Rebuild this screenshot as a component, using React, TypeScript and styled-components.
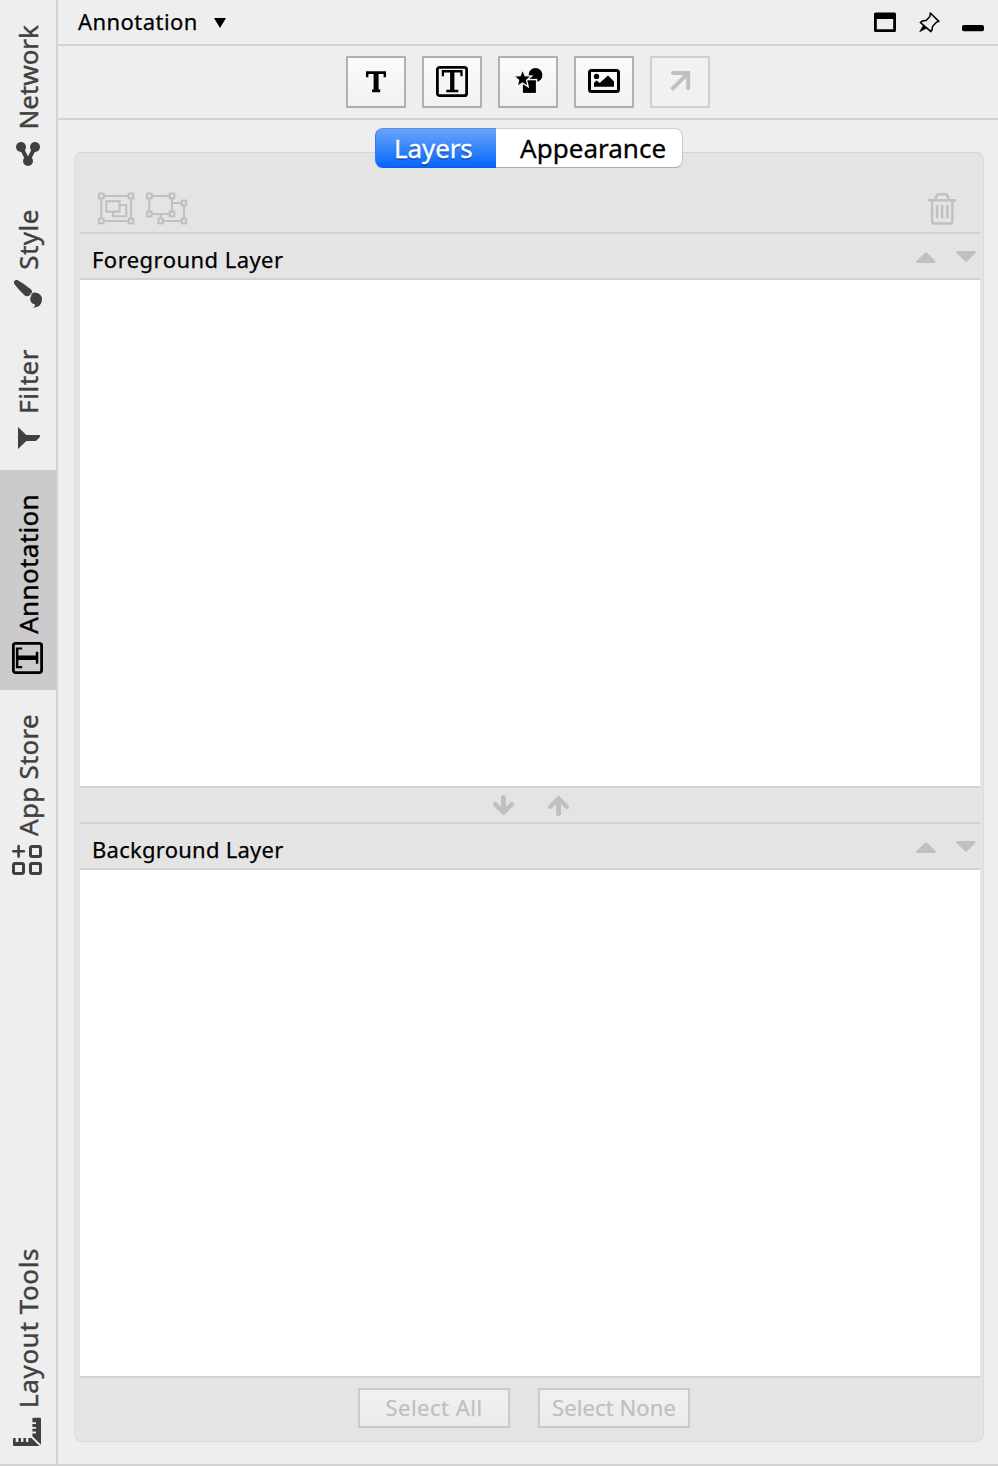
import React from 'react';
import styled, { createGlobalStyle, css } from 'styled-components';

const GlobalStyle = createGlobalStyle`
  * { box-sizing: border-box; }
  body {
    margin: 0;
    background: #eeeeee;
    font-family: 'Noto Sans', 'Open Sans', sans-serif;
    color: #000;
  }
  svg { display: block; flex: none; }
`;

const line = '#d2d2d2';
const disabled = '#c0c0c0';

const Window = styled.div`
  display: flex;
  width: 998px;
  height: 1466px;
  background: #eeeeee;
  border-bottom: 2px solid ${line};
  overflow: hidden;
`;

const Sidebar = styled.nav`
  display: flex;
  flex-direction: column;
  width: 58px;
  flex: none;
  border-right: 2px solid ${line};
`;

const Spacer = styled.div`
  flex: 1;
`;

const SideTab = styled.div<{ $height: number; $active?: boolean }>`
  display: flex;
  flex-direction: column;
  justify-content: flex-end;
  align-items: center;
  gap: 8.6px;
  height: ${(p) => p.$height}px;
  padding-bottom: 16px;
  flex: none;
  color: ${(p) => (p.$active ? '#000' : '#404040')};
  background: ${(p) => (p.$active ? '#cbcbcb' : 'transparent')};
`;

const SideLabel = styled.span<{ $tracking: number }>`
  writing-mode: vertical-rl;
  transform: rotate(180deg);
  font-size: 26px;
  line-height: 36px;
  white-space: nowrap;
  letter-spacing: ${(p) => p.$tracking}px;
  -webkit-text-stroke: 0.4px currentColor;
`;

const Main = styled.main`
  display: flex;
  flex-direction: column;
  flex: 1;
  min-width: 0;
`;

const TitleBar = styled.header`
  display: flex;
  align-items: center;
  justify-content: space-between;
  height: 46px;
  padding: 0 14px 0 20px;
  border-bottom: 2px solid ${line};
`;

const TitleMenu = styled.div`
  display: flex;
  align-items: center;
  gap: 16px;
  padding-bottom: 2px;
`;

const MenuArrow = styled.svg`
  margin-top: 4px;
`;

const WindowActions = styled.div`
  display: flex;
  gap: 22px;
`;

const Text = styled.span<{ $tracking?: number }>`
  font-size: 22px;
  line-height: 30px;
  white-space: nowrap;
  letter-spacing: ${(p) => p.$tracking ?? 0}px;
  -webkit-text-stroke: 0.25px currentColor;
`;

const ToolBar = styled.div`
  display: flex;
  justify-content: center;
  gap: 16px;
  height: 74px;
  padding-top: 10px;
  border-bottom: 2px solid ${line};
`;

const ToolButton = styled.button`
  display: flex;
  align-items: center;
  justify-content: center;
  width: 60px;
  height: 52px;
  padding: 0;
  border: 2px solid #b0b0b0;
  background: linear-gradient(#fbfbfb, #f1f1f1);
  color: #000;
  &:disabled {
    border-color: #cfcfcf;
    background: #f1f1f1;
    color: ${disabled};
  }
`;

const Content = styled.section`
  display: flex;
  flex-direction: column;
  align-items: center;
  flex: 1;
  padding: 8px 14px 22px 16px;
`;

const Segmented = styled.div`
  display: flex;
  position: relative;
  z-index: 1;
  height: 40px;
  width: 308px;
  margin-bottom: -16px;
  border-radius: 8px;
`;

const Segment = styled.div<{ $tracking: number; $selected?: boolean }>`
  display: flex;
  align-items: center;
  font-size: 26px;
  line-height: 36px;
  padding-bottom: 1px;
  letter-spacing: ${(p) => p.$tracking}px;
  -webkit-text-stroke: 0.3px currentColor;
  ${(p) =>
    p.$selected
      ? css`
          width: 121px;
          padding-left: 18px;
          color: #fff;
          background: linear-gradient(#6aa5f9, #0566fd);
          border: 1px solid;
          border-width: 1px 0 1px 1px;
          border-color: #5590ea #2f7cf0 #0a5ce6;
          border-radius: 8px 0 0 8px;
          text-shadow: 0 2px 1px rgba(0, 0, 0, 0.28);
        `
      : css`
          flex: 1;
          padding-left: 24px;
          background: #fff;
          border: 1px solid;
          border-width: 1px 1px 1px 0;
          border-color: #cfcfcf #c6c6c6 #ababab #fff;
          border-radius: 0 8px 8px 0;
        `}
`;

const Panel = styled.div`
  display: flex;
  flex-direction: column;
  align-self: stretch;
  flex: 1;
  padding: 0 3px 0 5px;
  border: 1px solid #dcdcdc;
  border-top-color: #d4d4d4;
  border-radius: 8px;
  background: #e4e4e4;
`;

const LayerTools = styled.div`
  display: flex;
  justify-content: space-between;
  height: 81px;
  padding: 39px 22px 0 16px;
  border-bottom: 2px solid ${line};
`;

const IconGroup = styled.div`
  display: flex;
`;

const LayerHeader = styled.div`
  display: flex;
  align-items: center;
  justify-content: space-between;
  height: 46px;
  padding: 6px 4px 0 12px;
  border-bottom: 2px solid ${line};
`;

const OrderButtons = styled.div`
  display: flex;
  gap: 20px;
  margin-top: -4px;
`;

const LayerList = styled.div`
  height: 508px;
  background: #fff;
  border-bottom: 2px solid ${line};
`;

const MoveBar = styled.div`
  display: flex;
  align-items: center;
  justify-content: center;
  gap: 32px;
  height: 36px;
  padding: 0 0 0 1px;
  border-bottom: 2px solid ${line};
`;

const Footer = styled.div`
  display: flex;
  justify-content: center;
  gap: 28px;
  padding: 10px 12px 0 0;
`;

const SelectButton = styled.button`
  display: flex;
  align-items: center;
  justify-content: center;
  width: 152px;
  height: 40px;
  padding: 0 0 2px 0;
  border: 2px solid #cacaca;
  background: linear-gradient(#f1f1f1, #ebebeb);
  color: ${disabled};
  font-family: inherit;
`;

const NetworkIcon = () => (
  <svg width="32" height="32" fill="currentColor">
    <path d="M9 9L16 23L23 9" fill="none" stroke="currentColor" strokeWidth="4" />
    <circle cx="9" cy="9" r="5" />
    <circle cx="23" cy="9" r="5" />
    <circle cx="16" cy="23" r="5" />
  </svg>
);

const StyleIcon = () => (
  <svg width="32" height="32" fill="currentColor">
    <path d="M2 3.5Q2.6 1.6 5.4 2.1Q13 6.4 18.8 11.2Q20.8 13.2 19.9 14.6Q18.4 15.6 17.6 17.5Q14.6 19.2 12.2 17Q6.6 11.6 2.3 6Q1.8 4.6 2 3.5Z" />
    <path d="M19.3 16.2Q20.6 14.2 23.2 14.6Q30 15.4 30 21.6Q29.6 29.6 21 29.7Q24 27.6 22.8 26.6Q17.4 25 18.3 19.6Q19.8 18.6 19.3 16.2Z" />
  </svg>
);

const FilterIcon = () => (
  <svg width="32" height="32" fill="currentColor">
    <path d="M6 5L14.3 13H27Q29 13.6 27.6 15.2L24 19H14.3L6 27Z" />
  </svg>
);

const BoxedTextIcon = ({ turned }: { turned?: boolean }) => (
  <svg width="32" height="32" viewBox="0 0 32 32" fill="currentColor">
    <g transform={turned ? 'rotate(-90 16 16)' : undefined}>
      <rect x="1.4" y="1.4" width="29.2" height="28.2" rx="2.2" fill="none" stroke="currentColor" strokeWidth="2.8" />
      <path d="M5.8 3.9H26.6V10.2H24.4V6.4H18.4V23.8H22.3V26.3H10.3V23.8H14.1V6.4H8V10.2H5.8Z" />
    </g>
  </svg>
);

const AppStoreIcon = () => (
  <svg width="32" height="32" fill="none" stroke="currentColor" strokeWidth="3">
    <path d="M1.3 7.3H11.9M6.6 2V12.6" strokeWidth="2.6" strokeLinecap="round" />
    <rect x="18.5" y="2.5" width="10" height="10" rx="1.8" />
    <rect x="1.5" y="19.5" width="10" height="10" rx="1.8" />
    <rect x="18.5" y="19.5" width="10" height="10" rx="1.8" />
  </svg>
);

const RulerIcon = () => (
  <svg width="32" height="32" fill="currentColor">
    <path d="M2.2 22H3.7V26H6.4V22H9V26H11.4V22H14V26H16.4V22H19.4L27.6 30H2.2Q1 30 1 28.8V23.2Q1 22 2.2 22Z" />
    <path d="M21.4 1.7H28Q29 1.7 29 2.8V28.8L20.4 20.2V17.4H24V15.6H20.4V12.7H24V10.9H20.4V8H24V6.2H20.4V2.7Q20.4 1.7 21.4 1.7Z" />
  </svg>
);

const WindowIcon = () => (
  <svg width="22" height="22">
    <path fillRule="evenodd" d="M1.5 1.5H20.5Q22 1.5 22 3V19.5Q22 21 20.5 21H1.5Q0 21 0 19.5V3Q0 1.5 1.5 1.5ZM2.8 8V18.2H19.2V8Z" />
  </svg>
);

const PinIcon = () => (
  <svg width="22" height="22" fill="none" stroke="#000" strokeWidth="1.5" strokeLinejoin="round">
    <path d="M12.3 2L20.9 10.4L18.4 11.2L14.5 15.4Q14.6 18.8 12.9 20.6L2.3 11.4Q4 9.4 8.1 9.6L11.9 5.4Z" />
    <path d="M5.2 14.3L1.5 20.9L8.6 17.2Z" fill="#000" strokeWidth="0.4" />
  </svg>
);

const MinimizeIcon = () => (
  <svg width="22" height="22">
    <rect x="0" y="14" width="22" height="6.3" rx="1.8" />
  </svg>
);

const TextIcon = () => (
  <svg width="32" height="32" viewBox="0 0 32 32" fill="currentColor">
    <path d="M6 5.2H26V11.2H23.6V8H18.6V23.6H20.2V26.2H12V23.6H13.6V8H8.4V11.2H6Z" />
  </svg>
);

const ShapesIcon = () => (
  <svg width="32" height="32" fill="#000" stroke="#f7f7f7" strokeWidth="1.4">
    <circle cx="23.5" cy="9" r="7.6" />
    <rect x="10.2" y="13.6" width="14.4" height="14" />
    <path d="M10.6 3.6L13.1 9.7L19.6 10.1L14.6 14.3L16.2 20.8L10.6 17.2L5 20.8L6.6 14.3L1.6 10.1L8.1 9.7Z" />
  </svg>
);

const ImageIcon = () => (
  <svg width="32" height="32" fill="#000">
    <rect x="1.5" y="4.5" width="29" height="21" rx="2" fill="none" stroke="#000" strokeWidth="3" />
    <circle cx="8.5" cy="10.4" r="2.7" />
    <path d="M6 20.8V16.8L8.7 14.6L11.7 17L20 9.6L26 15.4V20.8Z" />
  </svg>
);

const DiagonalArrowIcon = () => (
  <svg width="32" height="32" fill="none" stroke="currentColor" strokeWidth="4">
    <path d="M9 7H24.2V22" strokeLinecap="round" />
    <path d="M7.6 23.6L23.6 7.6" />
  </svg>
);

const Handles = ({ points }: { points: number[][] }) => (
  <>
    {points.map(([x, y]) => (
      <rect key={`${x}-${y}`} x={x - 2.3} y={y - 2.3} width="4.6" height="4.6" fill="#e4e4e4" />
    ))}
  </>
);

const GroupIcon = () => (
  <svg width="48" height="34" fill="none" stroke={disabled} strokeWidth="2.1">
    <rect x="5.3" y="4" width="29.7" height="25" />
    <rect x="10.3" y="9.2" width="13.2" height="10.4" />
    <path d="M23.5 13H30.3V24.2H17.2V19.6" />
    <Handles points={[[5.3, 4], [35, 4], [5.3, 29], [35, 29]]} />
  </svg>
);

const UngroupIcon = () => (
  <svg width="48" height="34" fill="none" stroke={disabled} strokeWidth="2.1">
    <rect x="5.3" y="4" width="22.7" height="18" />
    <path d="M28 11H40V29H16.7V22" />
    <Handles points={[[5.3, 4], [28, 4], [5.3, 22], [28, 22], [40, 11], [40, 29], [16.7, 29]]} />
  </svg>
);

const TrashIcon = () => (
  <svg width="32" height="34" fill="none" stroke={disabled} strokeWidth="2.4">
    <path d="M2 8.3H30M9 8L10.6 3.8Q11.1 2.3 12.7 2.3H19.3Q20.9 2.3 21.4 3.8L23 8" />
    <path d="M6.1 8.3V29Q6.1 31.5 8.6 31.5H24Q26.4 31.5 26.4 29V8.3" />
    <path d="M11.1 13V26.2M16.1 13V26.2M21.4 13V26.2" />
  </svg>
);

const RaiseIcon = () => (
  <svg width="20" height="14" fill={disabled}>
    <path d="M0.4 11L9 2.8Q10 1.9 11 2.8L19.4 11Q20.2 12.6 18.6 13H1.2Q-0.4 12.6 0.4 11Z" />
  </svg>
);

const LowerIcon = () => (
  <svg width="20" height="14" fill={disabled}>
    <path d="M0.4 3L9 11.2Q10 12.2 11 11.2L19.4 3Q20.2 1.4 18.6 1H1.2Q-0.4 1.4 0.4 3Z" />
  </svg>
);

const MoveArrow = ({ up }: { up?: boolean }) => (
  <svg width="22" height="22" viewBox="0 0 22 22" fill="none" stroke={disabled} strokeWidth="5">
    <g transform={up ? 'rotate(180 11 11.5)' : undefined}>
      <path d="M10.5 3.4V17" strokeLinecap="round" />
      <path d="M2.3 10.3L10.5 18.3L18.7 10.3" strokeLinecap="round" strokeWidth="4.6" />
    </g>
  </svg>
);

const Layer = ({ name, tracking }: { name: string; tracking: number }) => (
  <>
    <LayerHeader>
      <Text $tracking={tracking}>{name}</Text>
      <OrderButtons>
        <RaiseIcon />
        <LowerIcon />
      </OrderButtons>
    </LayerHeader>
    <LayerList />
  </>
);

export default function App() {
  return (
    <>
      <GlobalStyle />
      <Window>
        <Sidebar>
          <SideTab $height={186}>
            <SideLabel $tracking={0}>Network</SideLabel>
            <NetworkIcon />
          </SideTab>
          <SideTab $height={140}>
            <SideLabel $tracking={0.5}>Style</SideLabel>
            <StyleIcon />
          </SideTab>
          <SideTab $height={144}>
            <SideLabel $tracking={0.5}>Filter</SideLabel>
            <FilterIcon />
          </SideTab>
          <SideTab $height={220} $active>
            <SideLabel $tracking={0.35}>Annotation</SideLabel>
            <BoxedTextIcon turned />
          </SideTab>
          <SideTab $height={202}>
            <SideLabel $tracking={0.25}>App Store</SideLabel>
            <AppStoreIcon />
          </SideTab>
          <Spacer />
          <SideTab $height={242}>
            <SideLabel $tracking={0.6}>Layout Tools</SideLabel>
            <RulerIcon />
          </SideTab>
        </Sidebar>
        <Main>
          <TitleBar>
            <TitleMenu>
              <Text $tracking={0.45}>Annotation</Text>
              <MenuArrow width="12" height="10">
                <path d="M0 0H12L6 10Z" />
              </MenuArrow>
            </TitleMenu>
            <WindowActions>
              <WindowIcon />
              <PinIcon />
              <MinimizeIcon />
            </WindowActions>
          </TitleBar>
          <ToolBar>
            <ToolButton><TextIcon /></ToolButton>
            <ToolButton><BoxedTextIcon /></ToolButton>
            <ToolButton><ShapesIcon /></ToolButton>
            <ToolButton><ImageIcon /></ToolButton>
            <ToolButton disabled><DiagonalArrowIcon /></ToolButton>
          </ToolBar>
          <Content>
            <Segmented>
              <Segment $selected $tracking={-0.1}>Layers</Segment>
              <Segment $tracking={0.03}>Appearance</Segment>
            </Segmented>
            <Panel>
              <LayerTools>
                <IconGroup>
                  <GroupIcon />
                  <UngroupIcon />
                </IconGroup>
                <TrashIcon />
              </LayerTools>
              <Layer name="Foreground Layer" tracking={0.45} />
              <MoveBar>
                <MoveArrow />
                <MoveArrow up />
              </MoveBar>
              <Layer name="Background Layer" tracking={0.25} />
              <Footer>
                <SelectButton disabled><Text $tracking={0.5}>Select All</Text></SelectButton>
                <SelectButton disabled><Text $tracking={0.1}>Select None</Text></SelectButton>
              </Footer>
            </Panel>
          </Content>
        </Main>
      </Window>
    </>
  );
}
